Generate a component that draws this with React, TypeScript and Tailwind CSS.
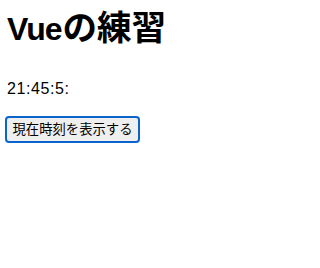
export default function App() {
  return (
    <div
      className="min-h-[268px] bg-white pl-[7px] pt-[10px] text-black"
      style={{ fontFamily: '"Liberation Sans", "Noto Sans CJK JP", sans-serif' }}
    >
      <h1 className="text-[32px] font-bold leading-[37px]">
        <span className="tracking-[-1px]">Vue</span>
        <span className="ml-[1px] text-[34.5px]">の練習</span>
      </h1>
      <p className="mt-[32px] text-[16px] leading-[18px] tracking-[0.6px]">21:45:5:</p>
      <button
        type="button"
        className="ml-[-2px] mt-[18px] flex h-[27px] w-[135px] items-center justify-center rounded-[4px] border-2 border-[#0b63ce] bg-[#efefef] text-[13.33px] leading-none text-black"
      >
        現在時刻を表示する
      </button>
    </div>
  );
}
